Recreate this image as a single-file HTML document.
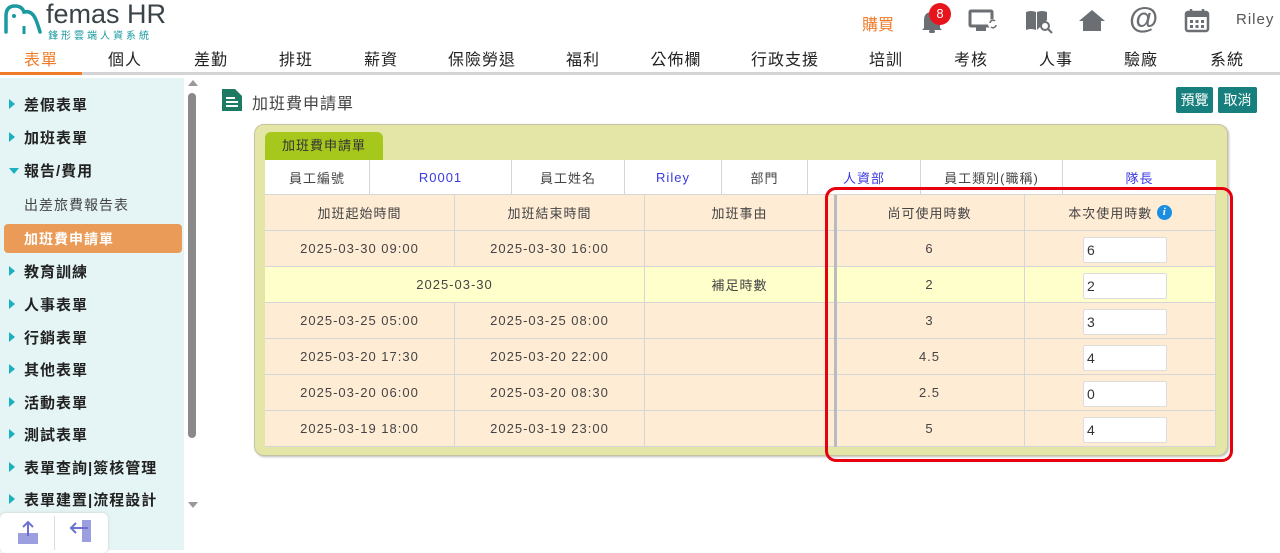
<!DOCTYPE html>
<html><head><meta charset="utf-8"><style>
*{box-sizing:border-box;margin:0;padding:0}
body{width:1280px;height:550px;overflow:hidden;background:#fff;font-family:"Liberation Sans","Noto Sans CJK TC",sans-serif;color:#333;position:relative}
.a{position:absolute}
.nav span{position:absolute;top:46px;font-size:16px;color:#222;transform:translateX(-50%);letter-spacing:1px}
.side{left:0;top:78px;width:184px;height:472px;background:#e5f5f5}
.si{position:absolute;left:24px;font-size:15px;color:#222;font-weight:bold;letter-spacing:1px}
.tri{position:absolute;left:9px;width:0;height:0;border-top:5px solid transparent;border-bottom:5px solid transparent;border-left:6px solid #1ab0c0}
.c{position:absolute;display:flex;align-items:center;justify-content:center;font-size:13px;color:#444;border-right:1px solid #d6d6d6;border-bottom:1px solid #d6d6d6;letter-spacing:1px}
.inp{position:absolute;left:1083px;width:84px;height:26px;background:#fff;border:1px solid #ddd;border-radius:2px;font-size:14px;padding-left:3px;line-height:24px;color:#333}
</style></head><body>
<svg class="a" style="left:2px;top:2px" width="42" height="34" viewBox="0 0 42 34"><path d="M4 30 V14 Q4 4 13 4 Q20 4 22 10 Q30 8 34 18 Q37 26 38 30" fill="none" stroke="#1a9aa0" stroke-width="3.5" stroke-linecap="round"/><circle cx="12" cy="14" r="2" fill="#1a9aa0"/><path d="M22 24 V32" stroke="#1a9aa0" stroke-width="3"/></svg>
<div class="a" style="left:46px;top:-1px;font-size:27px;color:#3a4448">femas HR</div>
<div class="a" style="left:48px;top:27px;font-size:10px;color:#1a9aa0;letter-spacing:3px">鋒形雲端人資系統</div>
<div class="a" style="left:862px;top:11px;font-size:16px;color:#f07c2a">購買</div>
<svg class="a" style="left:920px;top:8px" width="24" height="26" viewBox="0 0 24 26"><path d="M4 20 V12 Q4 4 12 4 Q20 4 20 12 V20 L22 22 H2 Z" fill="#6b6f73"/><rect x="9" y="22" width="6" height="3" rx="1.5" fill="#6b6f73"/></svg>
<div class="a" style="left:929px;top:3px;width:22px;height:22px;border-radius:50%;background:#e8141c;color:#fff;font-size:13px;text-align:center;line-height:22px">8</div>
<svg class="a" style="left:968px;top:9px" width="30" height="24" viewBox="0 0 30 24"><rect x="2" y="2" width="22" height="15" rx="1" fill="none" stroke="#6b6f73" stroke-width="3"/><rect x="8" y="18" width="10" height="4" fill="#6b6f73"/><circle cx="25" cy="15" r="5" fill="#fff"/><path d="M22 14a3 3 0 0 1 5-2M28 16a3 3 0 0 1-5 2" stroke="#6b6f73" stroke-width="1.5" fill="none"/></svg>
<svg class="a" style="left:1024px;top:8px" width="30" height="26" viewBox="0 0 30 26"><path d="M2 4 Q7 2 12 4 V22 Q7 20 2 22 Z M13 4 Q18 2 23 4 V12 L13 22 Z" fill="#6b6f73"/><circle cx="21" cy="18" r="4" fill="#fff" stroke="#6b6f73" stroke-width="2"/><path d="M24 21 L28 25" stroke="#6b6f73" stroke-width="2"/></svg>
<svg class="a" style="left:1078px;top:8px" width="28" height="24" viewBox="0 0 28 24"><path d="M14 2 L27 13 H23 V23 H5 V13 H1 Z" fill="#6b6f73"/></svg>
<div class="a" style="left:1129px;top:2px;font-size:30px;font-weight:bold;color:#6b6f73">@</div>
<svg class="a" style="left:1184px;top:7px" width="26" height="26" viewBox="0 0 26 26"><rect x="2" y="5" width="22" height="19" rx="2" fill="none" stroke="#6b6f73" stroke-width="2.5"/><rect x="2" y="5" width="22" height="5" fill="#6b6f73"/><path d="M7 2v5M19 2v5" stroke="#6b6f73" stroke-width="2.5"/><g fill="#6b6f73"><rect x="6" y="13" width="3" height="3"/><rect x="11.5" y="13" width="3" height="3"/><rect x="17" y="13" width="3" height="3"/><rect x="6" y="18" width="3" height="3"/><rect x="11.5" y="18" width="3" height="3"/><rect x="17" y="18" width="3" height="3"/></g></svg>
<div class="a" style="left:1236px;top:11px;font-size:15px;color:#555;letter-spacing:1px">Riley</div>
<div class="nav">
<span style="left:41px;color:#f07c2a">表單</span><span style="left:125px">個人</span><span style="left:211px">差勤</span><span style="left:296px">排班</span><span style="left:381px">薪資</span><span style="left:482px">保險勞退</span><span style="left:583px">福利</span><span style="left:676px">公佈欄</span><span style="left:785px">行政支援</span><span style="left:886px">培訓</span><span style="left:971px">考核</span><span style="left:1056px">人事</span><span style="left:1141px">驗廠</span><span style="left:1227px">系統</span>
</div>
<div class="a" style="left:0;top:72px;width:1280px;height:3px;background:#d4d4d4"></div>
<div class="a" style="left:0;top:72px;width:82px;height:3px;background:#f07c2a"></div>
<div class="a side">
<div class="tri" style="top:21px"></div><div class="si" style="top:16px">差假表單</div>
<div class="tri" style="top:54px"></div><div class="si" style="top:49px">加班表單</div>
<div class="a" style="left:9px;top:90px;border-left:5px solid transparent;border-right:5px solid transparent;border-top:6px solid #1ab0c0"></div><div class="si" style="top:82px">報告/費用</div>
<div class="si" style="top:117px;font-size:14px;color:#444;font-weight:normal">出差旅費報告表</div>
<div class="a" style="left:4px;top:146px;width:178px;height:29px;background:#eb9b58;border-radius:4px"></div>
<div class="si" style="top:151px;font-size:14px;color:#fff">加班費申請單</div>
<div class="tri" style="top:188px"></div><div class="si" style="top:183px">教育訓練</div>
<div class="tri" style="top:221px"></div><div class="si" style="top:216px">人事表單</div>
<div class="tri" style="top:254px"></div><div class="si" style="top:249px">行銷表單</div>
<div class="tri" style="top:286px"></div><div class="si" style="top:281px">其他表單</div>
<div class="tri" style="top:319px"></div><div class="si" style="top:314px">活動表單</div>
<div class="tri" style="top:351px"></div><div class="si" style="top:346px">測試表單</div>
<div class="tri" style="top:384px"></div><div class="si" style="top:379px">表單查詢|簽核管理</div>
<div class="tri" style="top:416px"></div><div class="si" style="top:411px">表單建置|流程設計</div>
</div>
<div class="a" style="left:184px;top:78px;width:16px;height:472px;background:#fff"></div>
<div class="a" style="left:188px;top:93px;width:8px;height:345px;background:#8a8a8a;border-radius:4px"></div>
<div class="a" style="left:188px;top:80px;border-left:5px solid transparent;border-right:5px solid transparent;border-bottom:6px solid #999"></div>
<div class="a" style="left:188px;top:502px;border-left:5px solid transparent;border-right:5px solid transparent;border-top:6px solid #999"></div>
<div class="a" style="left:0;top:513px;width:108px;height:40px;background:#fff;border-radius:6px;box-shadow:0 0 3px #ccc"></div>
<div class="a" style="left:54px;top:516px;width:1px;height:34px;background:#ddd"></div>
<svg class="a" style="left:16px;top:520px" width="24" height="26"><rect x="2" y="13" width="20" height="11" fill="#9b9fe0"/><path d="M12 16V2M7 7l5-5 5 5" stroke="#6c70d0" stroke-width="2" fill="none"/></svg>
<svg class="a" style="left:68px;top:518px" width="26" height="26"><rect x="14" y="2" width="9" height="22" fill="#9b9fe0"/><path d="M20 10H3M8 5l-5 5 5 5" stroke="#6c70d0" stroke-width="2" fill="none"/></svg>
<svg class="a" style="left:222px;top:89px" width="20" height="22" viewBox="0 0 20 22"><path d="M0 0H13L20 7V22H0Z" fill="#1e7a62"/><path d="M4 9H13M4 13H16M4 17H16" stroke="#fff" stroke-width="2"/></svg>
<div class="a" style="left:252px;top:90px;font-size:16px;color:#444;letter-spacing:1px">加班費申請單</div>
<div class="a" style="left:1176px;top:87px;width:37px;height:26px;background:#177f7d;color:#fff;font-size:14px;text-align:center;line-height:26px;border-radius:2px">預覽</div>
<div class="a" style="left:1218px;top:87px;width:39px;height:26px;background:#177f7d;color:#fff;font-size:14px;text-align:center;line-height:26px;border-radius:2px">取消</div>
<div class="a" style="left:254px;top:124px;width:974px;height:332px;background:#e3e6a6;border:1px solid #c4c4a0;border-radius:10px;box-shadow:1px 1px 2px #bbb"></div>
<div class="a" style="left:265px;top:132px;width:118px;height:29px;background:#a6c81c;border-radius:6px 6px 0 0;font-size:13px;color:#333;text-align:center;line-height:28px;letter-spacing:1px">加班費申請單</div>
<div class="a" style="left:265px;top:160px;width:951px;height:35px;background:#fff"></div>
<div class="c" style="left:265px;top:160px;width:105px;height:35px">員工編號</div>
<div class="c" style="left:370px;top:160px;width:142px;height:35px;color:#3a3ae0">R0001</div>
<div class="c" style="left:512px;top:160px;width:113px;height:35px">員工姓名</div>
<div class="c" style="left:625px;top:160px;width:97px;height:35px;color:#3a3ae0">Riley</div>
<div class="c" style="left:722px;top:160px;width:86px;height:35px">部門</div>
<div class="c" style="left:808px;top:160px;width:113px;height:35px;color:#3a3ae0">人資部</div>
<div class="c" style="left:921px;top:160px;width:142px;height:35px">員工類別(職稱)</div>
<div class="c" style="left:1063px;top:160px;width:153px;height:35px;color:#3a3ae0;border-right:none">隊長</div>
<div class="a" style="left:265px;top:195px;width:951px;height:252px;background:#ffecd5"></div>
<div class="a" style="left:265px;top:267px;width:951px;height:36px;background:#ffffcc"></div>
<div class="c" style="left:265px;top:195px;width:190px;height:36px">加班起始時間</div>
<div class="c" style="left:455px;top:195px;width:190px;height:36px">加班結束時間</div>
<div class="c" style="left:645px;top:195px;width:190px;height:36px">加班事由</div>
<div class="c" style="left:835px;top:195px;width:190px;height:36px">尚可使用時數</div>
<div class="c" style="left:1025px;top:195px;width:191px;height:36px">本次使用時數&nbsp;<span style="display:inline-block;width:15px;height:15px;border-radius:50%;background:#1a8ee0;color:#fff;font-size:11px;font-style:italic;font-weight:bold;text-align:center;line-height:15px;font-family:'Liberation Serif',serif;letter-spacing:0">i</span></div>

<div class="c" style="left:265px;top:231px;width:190px;height:36px">2025-03-30 09:00</div>
<div class="c" style="left:455px;top:231px;width:190px;height:36px">2025-03-30 16:00</div>
<div class="c" style="left:645px;top:231px;width:190px;height:36px"></div>
<div class="c" style="left:835px;top:231px;width:190px;height:36px">6</div>
<div class="c" style="left:1025px;top:231px;width:191px;height:36px"></div>

<div class="c" style="left:265px;top:267px;width:380px;height:36px">2025-03-30</div>
<div class="c" style="left:645px;top:267px;width:190px;height:36px">補足時數</div>
<div class="c" style="left:835px;top:267px;width:190px;height:36px">2</div>
<div class="c" style="left:1025px;top:267px;width:191px;height:36px"></div>

<div class="c" style="left:265px;top:303px;width:190px;height:36px">2025-03-25 05:00</div>
<div class="c" style="left:455px;top:303px;width:190px;height:36px">2025-03-25 08:00</div>
<div class="c" style="left:645px;top:303px;width:190px;height:36px"></div>
<div class="c" style="left:835px;top:303px;width:190px;height:36px">3</div>
<div class="c" style="left:1025px;top:303px;width:191px;height:36px"></div>

<div class="c" style="left:265px;top:339px;width:190px;height:36px">2025-03-20 17:30</div>
<div class="c" style="left:455px;top:339px;width:190px;height:36px">2025-03-20 22:00</div>
<div class="c" style="left:645px;top:339px;width:190px;height:36px"></div>
<div class="c" style="left:835px;top:339px;width:190px;height:36px">4.5</div>
<div class="c" style="left:1025px;top:339px;width:191px;height:36px"></div>

<div class="c" style="left:265px;top:375px;width:190px;height:36px">2025-03-20 06:00</div>
<div class="c" style="left:455px;top:375px;width:190px;height:36px">2025-03-20 08:30</div>
<div class="c" style="left:645px;top:375px;width:190px;height:36px"></div>
<div class="c" style="left:835px;top:375px;width:190px;height:36px">2.5</div>
<div class="c" style="left:1025px;top:375px;width:191px;height:36px"></div>

<div class="c" style="left:265px;top:411px;width:190px;height:36px">2025-03-19 18:00</div>
<div class="c" style="left:455px;top:411px;width:190px;height:36px">2025-03-19 23:00</div>
<div class="c" style="left:645px;top:411px;width:190px;height:36px"></div>
<div class="c" style="left:835px;top:411px;width:190px;height:36px">5</div>
<div class="c" style="left:1025px;top:411px;width:191px;height:36px"></div>

<div class="a" style="left:834px;top:195px;width:3px;height:252px;background:#b8bcc0"></div>
<div class="inp" style="top:237px">6</div>
<div class="inp" style="top:273px">2</div>
<div class="inp" style="top:309px">3</div>
<div class="inp" style="top:345px">4</div>
<div class="inp" style="top:381px">0</div>
<div class="inp" style="top:417px">4</div>
<div class="a" style="left:825px;top:187px;width:408px;height:275px;border:3px solid #e8000c;border-radius:11px"></div>
</body></html>
